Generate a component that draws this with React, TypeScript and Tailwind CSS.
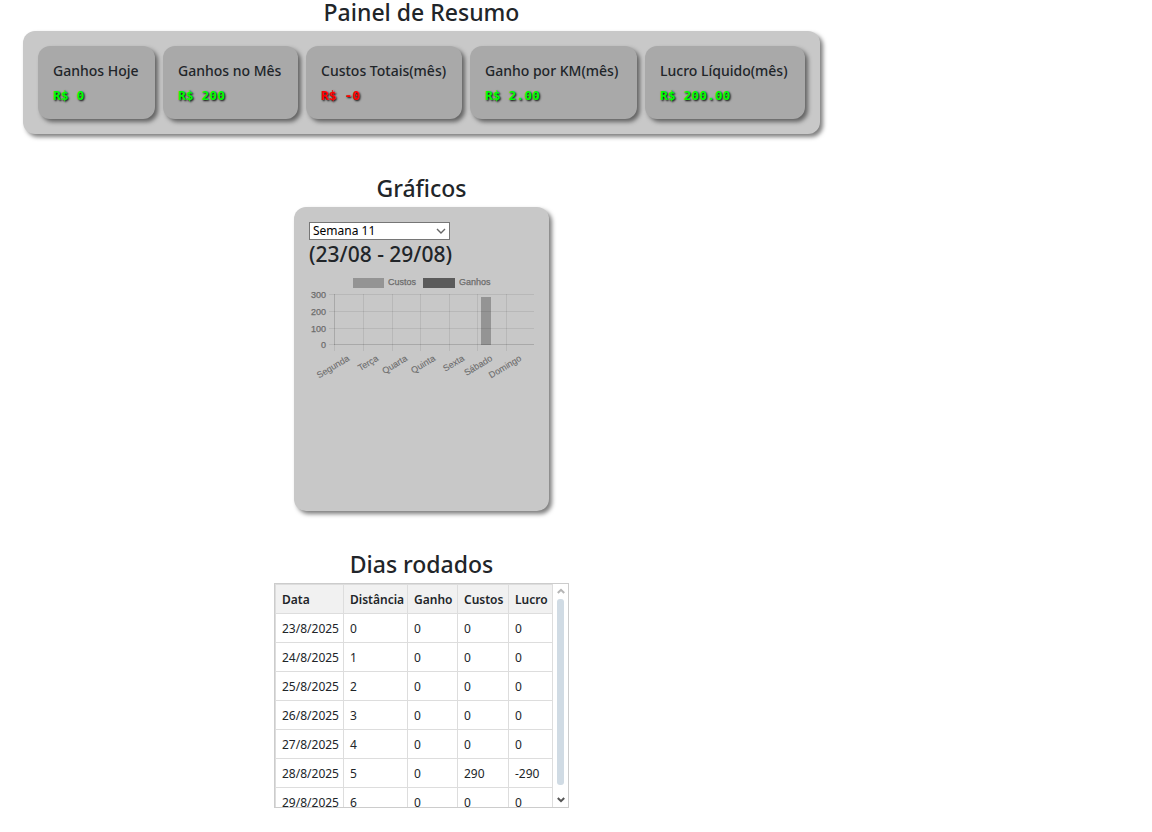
import React from "react";

const stats = [
  { label: "Ganhos Hoje", value: "R$ 0", tone: "text-[#00ff00]" },
  { label: "Ganhos no Mês", value: "R$ 200", tone: "text-[#00ff00]" },
  { label: "Custos Totais(mês)", value: "R$ -0", tone: "text-[#ff0000]" },
  { label: "Ganho por KM(mês)", value: "R$ 2.00", tone: "text-[#00ff00]" },
  { label: "Lucro Líquido(mês)", value: "R$ 200.00", tone: "text-[#00ff00]" },
];

const columns = ["Data", "Distância", "Ganho", "Custos", "Lucro"];

const rows = [
  ["23/8/2025", "0", "0", "0", "0"],
  ["24/8/2025", "1", "0", "0", "0"],
  ["25/8/2025", "2", "0", "0", "0"],
  ["26/8/2025", "3", "0", "0", "0"],
  ["27/8/2025", "4", "0", "0", "0"],
  ["28/8/2025", "5", "0", "290", "-290"],
  ["29/8/2025", "6", "0", "0", "0"],
];

const days = [
  { name: "Segunda", x: 25 },
  { name: "Terça", x: 54 },
  { name: "Quarta", x: 83 },
  { name: "Quinta", x: 111 },
  { name: "Sexta", x: 140 },
  { name: "Sábado", x: 168 },
  { name: "Domingo", x: 197 },
];

const ticks = [
  { value: 300, y: 19 },
  { value: 200, y: 36 },
  { value: 100, y: 53 },
  { value: 0, y: 69 },
];

function Title({ children }: { children: React.ReactNode }) {
  return <h2 className="mb-[7px] text-center text-[23px] leading-6 font-medium">{children}</h2>;
}

function WeekChart() {
  return (
    <svg
      viewBox="0 0 225 113"
      role="img"
      aria-label="Custos e ganhos por dia"
      className="block w-full font-['Liberation_Sans',Arial,sans-serif]"
    >
      <rect x="44" y="3" width="31" height="10" fill="#949494" />
      <rect x="114" y="3" width="32" height="10" fill="#5b5b5b" />
      <g fill="#6c6c6c" stroke="#6c6c6c" strokeWidth="0.25" fontSize="9">
        <text x="79" y="10">Custos</text>
        <text x="150" y="10">Ganhos</text>
        {ticks.map((t) => (
          <text key={t.value} x="17" y={t.y + 4} textAnchor="end">
            {t.value}
          </text>
        ))}
      </g>
      <g fill="#6c6c6c" stroke="#6c6c6c" strokeWidth="0.1" fontSize="9">
        {days.map((d) => (
          <text key={d.name} textAnchor="end" transform={`translate(${d.x + 16} 85) rotate(-31)`}>
            {d.name}
          </text>
        ))}
      </g>
      <rect x="172" y="22" width="10" height="48" fill="#949494" />
      <g stroke="#000000" strokeOpacity="0.08" strokeWidth="1">
        {ticks.map((t) => (
          <path key={t.value} d={`M20 ${t.y + 0.5}H225`} />
        ))}
        {days.map((d) => (
          <path key={d.name} d={`M${d.x + 0.5} 19V76`} />
        ))}
        <path d="M25.5 19V70M25 69.5H225" />
      </g>
    </svg>
  );
}

function Scrollbar() {
  return (
    <div aria-hidden="true" className="flex w-[15px] shrink-0 flex-col items-center justify-between py-1">
      <svg width="8" height="6" viewBox="0 0 8 6" fill="none" stroke="#b5b5b5" strokeWidth="2">
        <path d="M0.8 5L4 1.8L7.2 5" />
      </svg>
      <div className="mt-[5px] mb-3 w-[7px] grow rounded-[3px] bg-[#d0dbe4]" />
      <svg width="8" height="6" viewBox="0 0 8 6" fill="none" stroke="#555555" strokeWidth="2">
        <path d="M0.8 1L4 4.2L7.2 1" />
      </svg>
    </div>
  );
}

export default function App() {
  return (
    <main className="flex w-full max-w-[843px] flex-col items-center bg-white px-[23px] pb-6 font-['Noto_Sans','Open_Sans',sans-serif] text-[#212529]">
      <section className="w-full">
        <Title>Painel de Resumo</Title>
        <div className="grid grid-cols-[117fr_135fr_156fr_167fr_160fr] gap-2 rounded-[12px] bg-[#c8c8c8] p-[15px] shadow-[3px_3px_4px_rgba(0,0,0,0.5)]">
          {stats.map((s) => (
            <div
              key={s.label}
              className="rounded-[12px] bg-[#a9a9a9] px-[15px] pt-[15px] pb-[13px] shadow-[3px_3px_4px_rgba(0,0,0,0.5)]"
            >
              <h3 className="text-[14px] leading-5 font-medium whitespace-nowrap">{s.label}</h3>
              <p
                className={`mt-1 font-['DejaVu_Sans_Mono',monospace] text-[13px] leading-[21px] font-bold whitespace-nowrap [text-shadow:1px_1px_2px_#000] ${s.tone}`}
              >
                {s.value}
              </p>
            </div>
          ))}
        </div>
      </section>

      <section className="mt-[42px]">
        <Title>Gráficos</Title>
        <div className="min-h-[304px] w-[255px] rounded-[12px] bg-[#c8c8c8] p-[15px] shadow-[3px_3px_4px_rgba(0,0,0,0.5)]">
          <div className="relative w-[141px]">
            <select
              aria-label="Semana"
              className="block h-[18px] w-full appearance-none rounded-none border border-[#767676] bg-white px-[3px] text-[12px] leading-4 text-black"
            >
              <option>Semana 11</option>
            </select>
            <svg
              className="pointer-events-none absolute top-[6px] right-1"
              width="10"
              height="7"
              viewBox="0 0 10 7"
              fill="none"
              stroke="#666666"
              strokeWidth="1.4"
            >
              <path d="M1 1L5 5L9 1" />
            </svg>
          </div>
          <h3 className="mb-[7px] text-[21px] leading-7 font-medium">(23/08 - 29/08)</h3>
          <WeekChart />
        </div>
      </section>

      <section className="mt-[41px]">
        <Title>Dias rodados</Title>
        <div className="flex h-[225px] w-[295px] overflow-hidden border border-[#cccccc]">
          <div className="grow overflow-hidden">
            <table className="w-full table-fixed border-collapse text-left text-[12px] leading-4">
              <colgroup>
                <col className="w-[68px]" />
                <col className="w-[64px]" />
                <col className="w-[50px]" />
                <col className="w-[51px]" />
                <col className="w-[44px]" />
              </colgroup>
              <thead>
                <tr>
                  {columns.map((c) => (
                    <th key={c} className="h-[29px] border border-[#dddddd] bg-[#f1f1f1] px-[6px] pt-[2px] font-semibold">
                      {c}
                    </th>
                  ))}
                </tr>
              </thead>
              <tbody>
                {rows.map((r) => (
                  <tr key={r[0]}>
                    {r.map((cell, i) => (
                      <td key={columns[i]} className="h-[29px] border border-[#dddddd] px-[6px] pt-[2px]">
                        {cell}
                      </td>
                    ))}
                  </tr>
                ))}
              </tbody>
            </table>
          </div>
          <Scrollbar />
        </div>
      </section>
    </main>
  );
}
